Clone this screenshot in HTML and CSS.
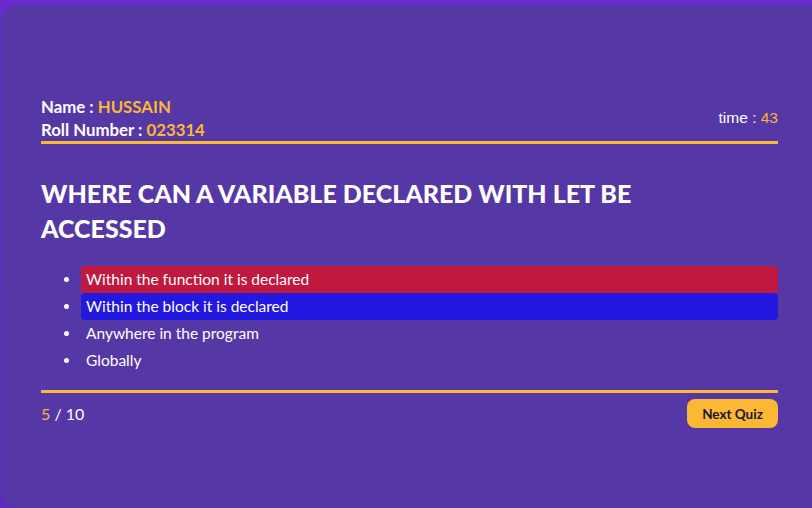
FILE: index.html
```html
<!DOCTYPE html>
<html>
<head>
<meta charset="utf-8">
<link rel="stylesheet" href="styles.css">
</head>
<body>
<div class="stage">
  <div class="card">
    <div class="quiz">
      <div class="head">
        <div class="who">
          <div class="row">Name : <span class="hl">HUSSAIN</span></div>
          <div class="row">Roll Number : <span class="hl">023314</span></div>
        </div>
        <div class="time">time : <span class="hl">43</span></div>
      </div>
      <h1 class="question">WHERE CAN A VARIABLE DECLARED WITH LET BE ACCESSED</h1>
      <ul class="options">
        <li class="opt wrong">Within the function it is declared</li>
        <li class="opt right">Within the block it is declared</li>
        <li class="opt">Anywhere in the program</li>
        <li class="opt">Globally</li>
      </ul>
      <div class="foot">
        <div class="count"><span class="hl">5</span> / 10</div>
        <button class="next">Next Quiz</button>
      </div>
    </div>
  </div>
</div>
</body>
</html>
```
FILE: styles.css
```css
html, body {
  margin: 0;
  padding: 0;
}
body {
  width: 812px;
  height: 508px;
  overflow: hidden;
  background: linear-gradient(180deg, #6a2ad2 0%, #5a2bc0 100%);
  font-family: "Lato", "Open Sans", sans-serif;
  color: #ffffff;
}
.stage {
  padding: 5px 0 0 1px;
}
.card {
  width: 840px;
  height: 503px;
  background: #5538a6;
  border-radius: 16px;
  box-sizing: border-box;
  padding: 90px 0 0 40px;
}
.quiz {
  width: 737px;
}
.hl {
  color: #fbb833;
}
.head {
  display: flex;
  justify-content: space-between;
  align-items: center;
  border-bottom: 3px solid #fbb833;
  padding-bottom: 0;
}
.row {
  font-weight: 700;
  font-size: 16.8px;
  line-height: 23px;
}
.time {
  font-family: "Liberation Sans", Arial, sans-serif;
  font-size: 15.5px;
  line-height: 20px;
}
.question {
  margin: 32px 0 20px;
  max-width: 620px;
  font-size: 25px;
  line-height: 35px;
  font-weight: 900;
  letter-spacing: 0;
}
.options {
  margin: 0;
  padding: 0 0 0 40px;
}
.opt {
  font-size: 15.5px;
  line-height: 27px;
  padding-left: 5px;
  border-radius: 4px;
}
.opt.wrong {
  background: #c0183f;
}
.opt.right {
  background: #2318e0;
}
.foot {
  margin-top: 16px;
  border-top: 3px solid #fbb833;
  padding-top: 6px;
  display: flex;
  justify-content: space-between;
  align-items: center;
}
.count {
  font-size: 16px;
  line-height: 20px;
}
.next {
  width: 91px;
  height: 29px;
  border: none;
  border-radius: 8px;
  background: #fbb833;
  color: #1a1530;
  font-family: "Lato", sans-serif;
  font-weight: 700;
  font-size: 13.5px;
  padding: 0;
}
```
